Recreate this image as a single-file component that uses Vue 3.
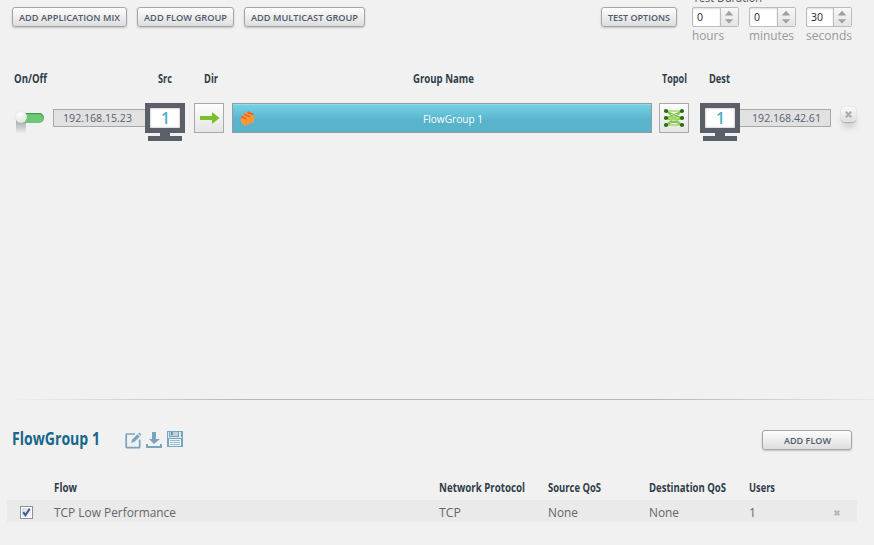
<script setup>
import { h } from 'vue'

// Single line of text fitted to a fixed width; baseline sits 12px below its top.
const FitText = (props) =>
  h('svg', { class: 'fit', width: props.w, height: 16 }, [
    h('text', { x: 0, y: 12, textLength: props.w, lengthAdjust: 'spacingAndGlyphs', fill: 'currentColor' }, props.t),
  ])
FitText.props = ['t', 'w']

const actions = [
  { t: 'ADD APPLICATION MIX', w: 101 },
  { t: 'ADD FLOW GROUP', w: 83 },
  { t: 'ADD MULTICAST GROUP', w: 107 },
]
const durations = [
  { v: '0', vw: 6, t: 'hours', w: 32 },
  { v: '0', vw: 6, t: 'minutes', w: 45 },
  { v: '30', vw: 12, t: 'seconds', w: 46 },
]
const groupHeads = [
  { t: 'On/Off', w: 33 }, { t: 'Src', w: 14 }, { t: 'Dir', w: 14 },
  { t: 'Group Name', w: 61 }, { t: 'Topol', w: 25 }, { t: 'Dest', w: 21 },
]
const flowHeads = [
  { t: 'Flow', w: 23 }, { t: 'Network Protocol', w: 86 }, { t: 'Source QoS', w: 53 },
  { t: 'Destination QoS', w: 77 }, { t: 'Users', w: 26 },
]
const flow = [
  { t: 'TCP Low Performance', w: 122 }, { t: 'TCP', w: 22 }, { t: 'None', w: 30 },
  { t: 'None', w: 30 }, { t: '1', w: 7 },
]
</script>

<template>
  <main class="page">
    <header class="toolbar">
      <button v-for="a in actions" :key="a.t" class="btn"><FitText :t="a.t" :w="a.w" /></button>
      <button class="btn options"><FitText t="TEST OPTIONS" :w="62" /></button>
      <section class="duration">
        <div class="caption"><FitText t="Test Duration" :w="69" /></div>
        <div class="fields">
          <div v-for="d in durations" :key="d.t" class="field">
            <div class="spinner">
              <div class="value"><FitText :t="d.v" :w="d.vw" /></div>
              <svg class="arrows" width="18" height="18" viewBox="0 0 18 18">
                <path d="M4 7.5 8.500 2.500 13 7.500z" fill="#a0a0a0" />
                <path d="M4 11.500h9L8.500 16z" fill="#a0a0a0" />
              </svg>
            </div>
            <div class="unit"><FitText :t="d.t" :w="d.w" /></div>
          </div>
        </div>
      </section>
    </header>

    <section class="groups">
      <div class="ghead heading">
        <span v-for="g in groupHeads" :key="g.t"><FitText :t="g.t" :w="g.w" /></span>
      </div>
      <div class="grow">
        <div class="toggle"><i class="shade"></i><i class="track"></i><i class="knob"></i></div>
        <div class="ip src"><FitText t="192.168.15.23" :w="69" /></div>
        <div class="monitor"><div class="screen"><FitText t="1" :w="9" /></div><i class="neck"></i><i class="base"></i></div>
        <div class="tile dir">
          <svg width="28" height="28" viewBox="0 0 28 28">
            <path d="M5 12h12V8l7.500 6-7.500 6v-4H5z" fill="#7bbf2b" />
          </svg>
        </div>
        <div class="bar">
          <svg class="stack" width="15" height="16" viewBox="0 0 15 16">
            <path d="M1 6 3 5l1-2 2-1 1.500-1L14 4v7l-3 1-1 1-2.500.5L6.500 15 1 12z" fill="#fb9a35" />
            <path d="m1 5.500 5.500 2.500M4 3.200l6 2.600M7.500 1l6 2.600" fill="none" stroke="#ee5f2a" stroke-width="1.700" />
            <path d="M6.500 8v6.500M10 6v6" stroke="#e88a3a" stroke-width=".6" />
          </svg>
          <div class="name"><FitText t="FlowGroup 1" :w="60" /></div>
        </div>
        <div class="tile topol">
          <svg width="28" height="28" viewBox="0 0 28 28">
            <g fill="none" stroke="#83c83e" stroke-width="1.2">
              <path d="M6 7h16M6 14h16M6 21h16M6 7l16 7M6 7l16 14M6 14l16-7M6 14l16 7M6 21l16-7M6 21 22 7" />
            </g>
            <path d="m10 14 4-3.500 4 3.500-4 3.500z" fill="#a9d97c" opacity=".7" />
            <g fill="#286c15">
              <circle cx="6" cy="7" r="2.1" /><circle cx="6" cy="14" r="2.1" /><circle cx="6" cy="21" r="2.1" />
              <circle cx="22" cy="7" r="2.1" /><circle cx="22" cy="14" r="2.1" /><circle cx="22" cy="21" r="2.1" />
            </g>
          </svg>
        </div>
        <div class="monitor dest"><div class="screen"><FitText t="1" :w="9" /></div><i class="neck"></i><i class="base"></i></div>
        <div class="ip dst"><FitText t="192.168.42.61" :w="69" /></div>
        <div class="close">
          <svg width="7" height="7" viewBox="0 0 7 7"><path d="m.8.8 5.400 5.400M6.200.8.8 6.200" stroke="#a9adb3" stroke-width="2.200" /></svg>
        </div>
      </div>
    </section>

    <hr class="divider" />

    <section class="detail">
      <div class="dhead">
        <h1><FitText t="FlowGroup 1" :w="88" /></h1>
        <div class="icons">
          <svg width="17" height="17" viewBox="0 0 17 17">
            <path d="M10 2H2.200q-1 0-1 1v11.700q0 1 1 1h11.500q1 0 1-1V7.500" fill="none" stroke="#76a5bf" stroke-width="1.700" />
            <path d="M6 11 7.200 7.500 12.500 2.200l2.300 2.300-5.300 5.300z" fill="#76a5bf" />
            <path d="m13.200 1.500 1.200-1 2 2-1 1.200z" fill="#76a5bf" />
          </svg>
          <svg width="16" height="17" viewBox="0 0 16 17">
            <path d="M6 0h4v7h4L8 12 3 7h3zM0 12h2v2h12v-2h2v4H0z" fill="#76a5bf" />
          </svg>
          <svg class="save" width="16" height="16" viewBox="0 0 16 16">
            <path d="M0 0h16v16H0z" fill="#76a5bf" />
            <path d="M3 1h8v4H3z" fill="#bdd1dc" /><path d="M4 1h2v3H4z" fill="#6898b3" />
            <path d="M1 1h1v5H1zM12 1h2v5h-2zM1 6h14v1H1z" fill="#dfe8ed" />
            <path d="M2 8h12v7H2z" fill="#f0f2f3" />
            <path d="M3 9.500h10M3 11.500h10M3 13.500h10" stroke="#9fbccb" />
          </svg>
        </div>
        <button class="btn add"><FitText t="ADD FLOW" :w="47" /></button>
      </div>
      <div class="cols heading">
        <span v-for="f in flowHeads" :key="f.t"><FitText :t="f.t" :w="f.w" /></span>
      </div>
      <div class="cols row">
        <span v-for="(f, i) in flow" :key="i"><FitText :t="f.t" :w="f.w" /></span>
        <svg class="remove" width="6" height="6" viewBox="0 0 6 6"><path d="m.7.7 4.600 4.600M5.300.7.7 5.300" stroke="#b3b7bb" stroke-width="2" /></svg>
        <div class="check">
          <svg width="9" height="9" viewBox="0 0 9 9"><path d="M1.200 4.200 3.400 7.200 7.700.8" fill="none" stroke="#41569b" stroke-width="2" /></svg>
        </div>
      </div>
    </section>
  </main>
</template>

<style>
body { background: #f1f1f1; overflow: hidden; }
</style>

<style scoped>
* { box-sizing: border-box; }
.page { width: 874px; height: 545px; overflow: hidden; background: #f1f1f1; font-family: "Open Sans", "Noto Sans", sans-serif; display: flex; flex-direction: column; }
.fit { display: block; overflow: visible; flex: none; }
.btn { height: 20px; padding: 0 6px; border: 1px solid #a5a5a5; border-radius: 3px; background: linear-gradient(#fdfdfd, #dedede); box-shadow: 0 1px 2px #0003; display: flex; align-items: center; justify-content: center; font: 600 9.4px "Open Sans", sans-serif; color: #4f5a6b; }
.toolbar { height: 68px; padding: 7px 0 0 12px; display: flex; align-items: flex-start; gap: 10px; }
.options { margin-left: 226px; }
.duration { margin: -17px 0 0 5px; }
.caption { height: 17px; padding-left: 1px; font-size: 12px; color: #555; }
.fields { display: flex; gap: 10px; }
.field { width: 47px; }
.spinner { width: 47px; height: 20px; display: flex; border: 1px solid #bcbcbc; border-radius: 2px; background: #fff; }
.field:last-child .spinner { width: 46px; }
.value { flex: 1; padding: 1px 0 0 4px; font-size: 11.5px; color: #222; box-shadow: inset 0 1px 2px #0002; }
.arrows { flex: none; border-left: 1px solid #bcbcbc; background: linear-gradient(#f7f7f7, #e4e4e4); }
.unit { padding-top: 1px; font-size: 12px; color: #999; }
.heading { font-size: 12.4px; font-weight: 700; color: #303e4a; }
.groups { height: 331px; flex: none; }
.ghead { display: grid; grid-template-columns: 144.5px 46px 209px 249px 47px 1fr; padding: 3px 0 0 13.5px; height: 35px; }
.grow { height: 45px; display: flex; align-items: flex-start; }
.toggle { width: 29px; height: 28px; margin: 6px 9px 0 15px; position: relative; }
.toggle i { position: absolute; }
.track { left: 4px; top: 4px; width: 25px; height: 10px; border-radius: 5px; background: #6dc774; box-shadow: inset 0 1px 1px #3b9345; }
.knob { left: 0; top: 2px; width: 12px; height: 12px; border-radius: 50%; background: radial-gradient(circle at 40% 30%, #fff, #dadada); box-shadow: 0 0 1px #0003; }
.shade { left: 1px; top: 10px; width: 10px; height: 15px; background: linear-gradient(#a0a0a0, #f0f0f000); }
.ip { width: 92px; height: 18px; margin-top: 6px; border: 1px solid #a8a8a8; background: #e1e1e1; font-size: 10px; color: #536074; }
.src { padding-left: 9px; border-right: 0; }
.dst { width: 91px; border-left: 0; padding-left: 12px; }
.monitor { width: 40px; display: flex; flex-direction: column; align-items: center; }
.dest { margin-left: 11px; }
.screen { width: 40px; height: 30px; border: 5px solid #5b6068; background: #fff; box-shadow: inset 0 0 2px #9988a0; display: flex; justify-content: center; padding: 4px 0 0 1px; font-size: 16.5px; font-weight: 600; color: #52adc4; }
.neck { width: 10px; height: 3px; background: #5b6068; }
.base { width: 34px; height: 5px; background: #5b6068; }
.tile { width: 30px; height: 30px; border: 1px solid #a9a9a9; background: linear-gradient(#fdfdfd, #e5e5e5); }
.tile svg { display: block; }
.dir { margin: 0 8px 0 9px; }
.topol { margin-left: 7px; }
.bar { width: 420px; height: 30px; display: flex; border: 1px solid #939b9d; background: linear-gradient(#74d1e4 5%, #58b3cb 60%, #58b3cb); box-shadow: inset 0 1px #91dbe8; font-size: 10.5px; color: #fff; }
.stack { margin: 7px 0 0 7px; }
.name { margin: 7px 0 0 168px; }
.close { width: 15px; height: 15px; margin: 4px 0 0 10px; border-radius: 4px; background: linear-gradient(#fafafa, #dedede); box-shadow: 0 0 1px #8888, 0 1px 1px #9999, 0 7px 6px -1px #0002; display: flex; align-items: center; justify-content: center; }
.divider { width: 100%; height: 1px; margin: 0; flex: none; border: 0; background: linear-gradient(90deg, #f0f0f0 1%, #b7b7b7 28%, #b7b7b7 75%, #e8e8e8); }
.dhead { height: 80px; padding: 30px 0 0 12px; display: flex; align-items: flex-start; }
h1 { margin: 3px 0 0; width: 112px; font-size: 17.8px; font-weight: 700; color: #17678c; }
.icons { display: flex; gap: 5px; margin-top: 2px; padding-left: 1px; width: 638px; }
.icons svg:nth-child(2) { margin-left: -1px; }
.save { margin-top: -1px; }
.add { width: 90px; }
.cols { display: grid; grid-template-columns: 385px 109px 101px 100px 1fr; margin: 0 17px 0 7px; padding-left: 46.5px; position: relative; }
.cols.heading { height: 20px; }
.row { height: 22px; padding-top: 5px; background: #eaeaea; font-size: 12.4px; color: #666; }
.check { position: absolute; left: 13px; top: 6px; width: 13px; height: 13px; border: 1px solid #8d9098; background: linear-gradient(135deg, #d0d5dc, #fff); box-shadow: inset 0 0 0 1px #fff; padding: 1px; }
.check svg { display: block; }
.remove { position: absolute; left: 827px; top: 10px; }
</style>
